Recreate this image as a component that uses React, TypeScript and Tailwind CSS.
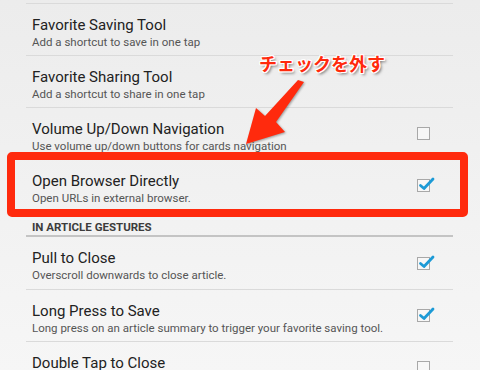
import React from "react";

type Row = { title: string; sub: string; check?: boolean | null };

function Checkbox({ checked }: { checked: boolean }) {
  return (
    <div className="relative w-[13px] h-[13px] border-[1.5px] border-[#a8a8a8] bg-[#f7f7f7]">
      {checked && (
        <svg
          className="absolute left-[0px] top-[-4px]"
          width="17"
          height="15"
          viewBox="0 0 17 15"
        >
          <path
            d="M2.5 9.5 L6 12.5 L15 3"
            fill="none"
            stroke="#1c9ad6"
            strokeWidth="2.8"
            strokeLinecap="round"
            strokeLinejoin="round"
          />
        </svg>
      )}
    </div>
  );
}

function PrefRow({ row, noTop }: { row: Row; noTop?: boolean }) {
  return (
    <div
      className={
        "flex items-center h-[52px] " +
        (noTop ? "" : "border-t border-[#dadada]")
      }
    >
      <div className="flex-1 pl-[6px] pt-[11px] self-start min-w-0">
        <div className="text-[15px] leading-[20px] text-[#222222] whitespace-nowrap">
          {row.title}
        </div>
        <div className="text-[11.5px] leading-[14px] text-[#555555] whitespace-nowrap">
          {row.sub}
        </div>
      </div>
      {row.check !== null && row.check !== undefined && (
        <div className="pr-[23px] flex items-center">
          <Checkbox checked={row.check} />
        </div>
      )}
    </div>
  );
}

export default function App() {
  const top: Row[] = [
    { title: "Favorite Saving Tool", sub: "Add a shortcut to save in one tap", check: null },
    { title: "Favorite Sharing Tool", sub: "Add a shortcut to share in one tap", check: null },
    { title: "Volume Up/Down Navigation", sub: "Use volume up/down buttons for cards navigation", check: false },
    { title: "Open Browser Directly", sub: "Open URLs in external browser.", check: true },
  ];
  const bottom: Row[] = [
    { title: "Pull to Close", sub: "Overscroll downwards to close article.", check: true },
    { title: "Long Press to Save", sub: "Long press on an article summary to trigger your favorite saving tool.", check: true },
    { title: "Double Tap to Close", sub: "Double tap on an article to close it.", check: false },
  ];
  return (
    <div
      className="relative w-[480px] h-[370px] overflow-hidden bg-gradient-to-b from-[#ececec] to-[#f6f6f6]"
      style={{ fontFamily: "Roboto, 'Noto Sans', sans-serif" }}
    >
      <div className="pl-[26px] pr-[27px] pt-[3px]">
        {top.map((r) => (
          <PrefRow key={r.title} row={r} />
        ))}
        <div className="h-[26px] pl-[6px] pt-[9px] border-b-2 border-[#c4c4c4] text-[11.5px] leading-[14px] font-bold text-[#3c3c3c]">
          IN ARTICLE GESTURES
        </div>
        {bottom.map((r, i) => (
          <PrefRow key={r.title} row={r} noTop={i === 0} />
        ))}
      </div>

      {/* red highlight box */}
      <div className="absolute left-[7px] top-[152px] w-[461px] h-[65px] border-[8px] border-[#ff2a0d] rounded-[5px]" />

      {/* arrow */}
      <svg
        className="absolute left-0 top-0 [filter:drop-shadow(1px_1px_1px_rgba(0,0,0,0.35))]"
        width="480"
        height="370"
        viewBox="0 0 480 370"
      >
        <polygon
          points="304,82 276,122 285,132 246,144 256,108 265,116 298,80"
          fill="#ff2a0d"
        />
      </svg>

      {/* label */}
      <div
        className="absolute left-[259px] top-[51px] text-[18px] leading-[24px] font-bold text-[#ff2a0d] whitespace-nowrap [text-shadow:1px_0_0_#fff,-1px_0_0_#fff,0_1px_0_#fff,0_-1px_0_#fff,1px_1px_0_#fff,-1px_-1px_0_#fff,1px_-1px_0_#fff,-1px_1px_0_#fff,2px_2px_3px_rgba(0,0,0,0.55)]"
        style={{ fontFamily: "'Noto Sans CJK JP', sans-serif" }}
      >
        チェックを外す
      </div>
    </div>
  );
}
